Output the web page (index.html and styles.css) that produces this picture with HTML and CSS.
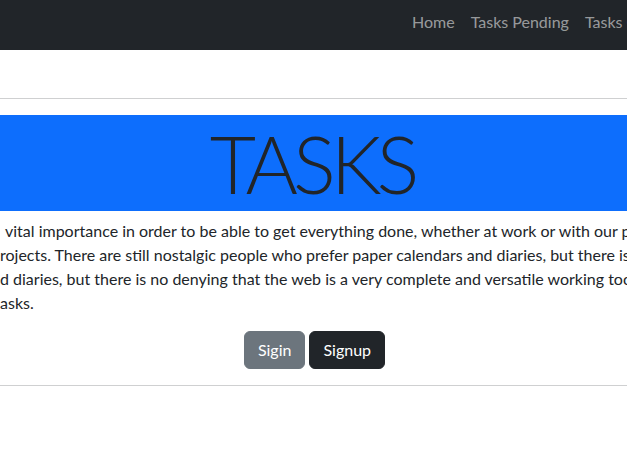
FILE: index.html
```html
<!DOCTYPE html>
<html lang="en">
<head>
<meta charset="utf-8">
<title>Tasks</title>
<link rel="stylesheet" href="styles.css">
</head>
<body>
<nav class="navbar">
  <ul class="nav">
    <li><a class="nav-link" href="#">Home</a></li>
    <li><a class="nav-link" href="#">Tasks Pending</a></li>
    <li><a class="nav-link" href="#">Tasks Completed</a></li>
  </ul>
</nav>
<main class="main">
  <hr class="rule">
  <section class="banner">
    <h1 class="display">TASKS</h1>
  </section>
  <p class="lede">vital importance in order to be able to get everything done, whether at work or with our personal<br>rojects. There are still nostalgic people who prefer paper calendars and diaries, but there is no denying<br>d diaries, but there is no denying that the web is a very complete and versatile working tool to<br>asks.</p>
  <div class="actions">
    <button class="btn btn-secondary" type="button">Sigin</button>
    <button class="btn btn-dark" type="button">Signup</button>
  </div>
  <hr class="rule">
</main>
</body>
</html>
```

FILE: styles.css
```css
html, body {
  margin: 0;
  padding: 0;
  overflow: hidden;
}
body {
  font-family: "Segoe UI", Lato, "Noto Sans", sans-serif;
  font-size: 16px;
  line-height: 24px;
  color: #212529;
  background: #fff;
}
.navbar {
  height: 50px;
  background: #212529;
  display: flex;
  align-items: center;
  padding-left: 404px;
  overflow: hidden;
}
.nav {
  list-style: none;
  margin: 0;
  padding: 0 0 6px;
  display: flex;
  white-space: nowrap;
}
.nav-link {
  display: block;
  padding: 0 8px;
  color: rgba(255, 255, 255, 0.55);
  text-decoration: none;
}
.main {
  padding-top: 32px;
}
.rule {
  margin: 16px 0;
  border: 0;
  border-top: 1px solid #cfd0d1;
  height: 0;
}
.banner {
  background: #0d6efd;
  text-align: center;
  margin-bottom: 8px;
}
.display {
  margin: 0;
  font-size: 80px;
  font-weight: 300;
  line-height: 96px;
  letter-spacing: -5px;
  text-indent: -3px;
  color: #212529;
}
.lede {
  margin: 0 0 16px;
  text-indent: 5px;
  white-space: nowrap;
  overflow: hidden;
}
.actions {
  display: flex;
  justify-content: center;
  gap: 4px;
  padding-left: 2px;
}
.btn {
  font-family: inherit;
  font-size: 16px;
  line-height: 24px;
  padding: 6px 13px;
  border-radius: 6px;
  border: 1px solid transparent;
  color: #fff;
  cursor: pointer;
}
.btn-secondary {
  background: #6c757d;
  border-color: #6c757d;
}
.btn-dark {
  background: #212529;
  border-color: #212529;
}
```
